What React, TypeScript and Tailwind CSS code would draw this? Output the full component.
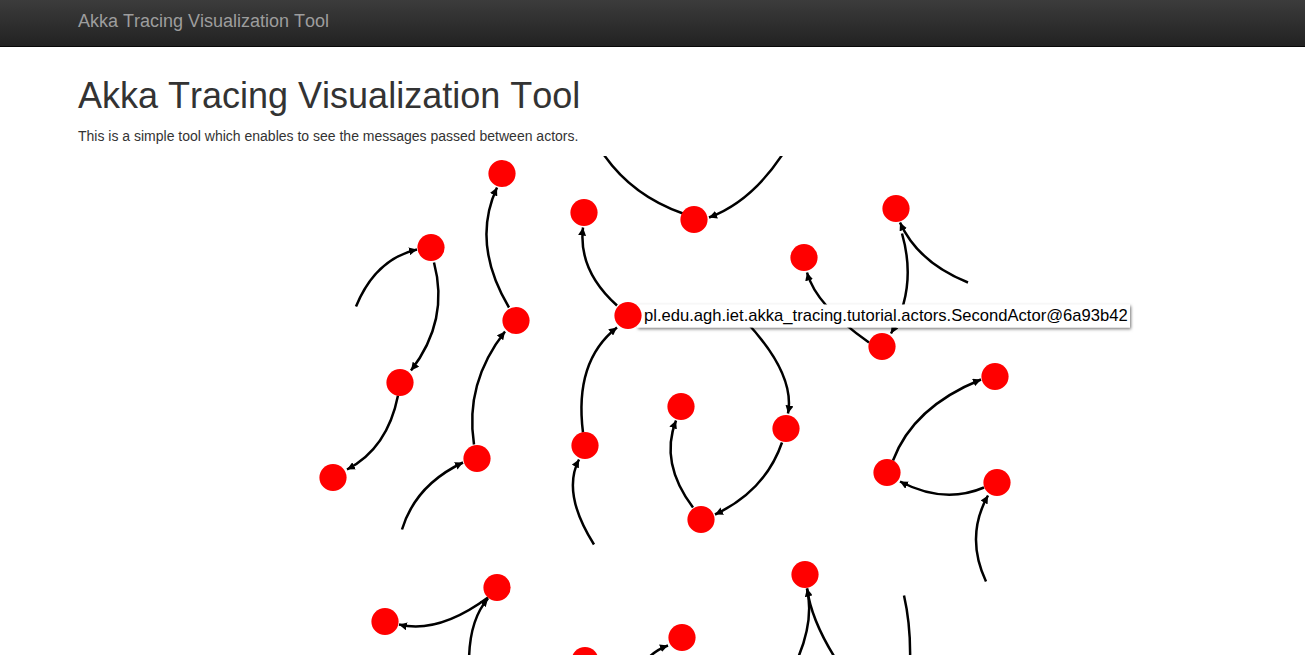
import React from "react";

type Edge = [number, number, number, number, number, number, boolean];

// actor nodes, page coordinates
const nodes: [number, number][] = [
  [502, 173], [584, 212], [694, 219], [896, 208], [431, 247], [804, 257],
  [516, 320], [882, 346], [995, 376], [400, 382], [681, 406], [786, 428],
  [585, 445], [477, 458], [333, 477], [887, 472], [997, 482], [701, 519],
  [805, 574], [497, 587], [385, 621], [682, 637], [585, 660],
];

const hovered: [number, number] = [628, 315];

// start, point on the curve, end (arrow tip), arrow?
const edges: Edge[] = [
  [356, 306, 381, 268, 417, 249, true],
  [434, 262, 436, 318, 411, 370, true],
  [398, 395, 380, 440, 347, 469, true],
  [509, 307, 487, 245, 497, 187, true],
  [402, 529, 424, 490, 463, 462, true],
  [474, 444, 477, 385, 505, 331, true],
  [617, 305, 589, 268, 583, 227, true],
  [583, 432, 587, 370, 617, 327, true],
  [594, 544, 574, 497, 579, 459, true],
  [601, 150, 636, 188, 683, 213, false],
  [785, 150, 750, 192, 709, 217, true],
  [869, 342, 827, 306, 807, 272, true],
  [902, 233, 907, 285, 891, 333, true],
  [968, 282, 926, 257, 900, 222, true],
  [745, 320, 781, 370, 788, 413, true],
  [782, 442, 757, 484, 715, 514, true],
  [693, 507, 672, 463, 676, 420, true],
  [893, 460, 925, 413, 981, 379, true],
  [984, 487, 943, 494, 900, 481, true],
  [986, 581, 976, 537, 988, 495, true],
  [488, 597, 441, 622, 399, 624, true],
  [469, 660, 474, 624, 488, 598, true],
  [640, 668, 652, 654, 668, 645, true],
  [796, 662, 808, 623, 807, 588, true],
  [838, 662, 817, 623, 807, 588, false],
  [904, 595, 909, 627, 910, 662, false],
];

function curve([sx, sy, mx, my, tx, ty]: Edge) {
  const cx = 2 * mx - (sx + tx) / 2;
  const cy = 2 * my - (sy + ty) / 2;
  return `M${sx},${sy} Q${cx},${cy} ${tx},${ty}`;
}

function Graph() {
  return (
    <svg
      className="block w-full h-[500px]"
      viewBox="0 155.5 1305 500"
      preserveAspectRatio="xMinYMin slice"
    >
      <defs>
        <marker
          id="arrow"
          viewBox="0 -5 10 10"
          refX="10"
          refY="0"
          markerWidth="8"
          markerHeight="8"
          markerUnits="userSpaceOnUse"
          orient="auto"
        >
          <path d="M0,-5L10,0L0,5" fill="#000" />
        </marker>
        <filter id="shadow" x="-5%" y="-50%" width="110%" height="200%">
          <feDropShadow dx="1" dy="1.5" stdDeviation="1.5" floodColor="#000" floodOpacity="0.55" />
        </filter>
      </defs>

      {edges.map((e, i) => (
        <path
          key={i}
          d={curve(e)}
          fill="none"
          stroke="#000"
          strokeWidth={2.5}
          markerEnd={e[6] ? "url(#arrow)" : undefined}
        />
      ))}

      {nodes.map(([x, y], i) => (
        <circle key={i} cx={x} cy={y} r={13.6} fill="#ff0000" />
      ))}

      <rect x={637} y={304} width={493} height={23} fill="#fff" filter="url(#shadow)" />
      <text
        x={644}
        y={320.5}
        fontSize={16.6}
        fill="#000"
        style={{ fontFamily: '"Liberation Sans", Arial, sans-serif' }}
      >
        pl.edu.agh.iet.akka_tracing.tutorial.actors.SecondActor@6a93b42
      </text>
      <circle cx={hovered[0]} cy={hovered[1]} r={13.6} fill="#ff0000" />
    </svg>
  );
}

export default function App() {
  return (
    <div className="min-h-screen overflow-hidden bg-white font-['Liberation_Sans',Arial,sans-serif] text-[#333] [font-kerning:none]">
      <nav className="h-[47px] border-b border-[#080808] bg-gradient-to-b from-[#3c3c3c] to-[#222]">
        <div className="px-[78px] pt-[11px] text-[18px] leading-[20px] text-[#9d9d9d]">
          Akka Tracing Visualization Tool
        </div>
      </nav>

      <main>
        <header className="px-[78px]">
          <h1 className="mt-[29px] mb-[10px] text-[36px] leading-[39.6px] font-medium">
            Akka Tracing Visualization Tool
          </h1>
          <p className="mb-[10px] text-[14px] leading-[20px]">
            This is a simple tool which enables to see the messages passed between actors.
          </p>
        </header>
        <Graph />
      </main>
    </div>
  );
}
